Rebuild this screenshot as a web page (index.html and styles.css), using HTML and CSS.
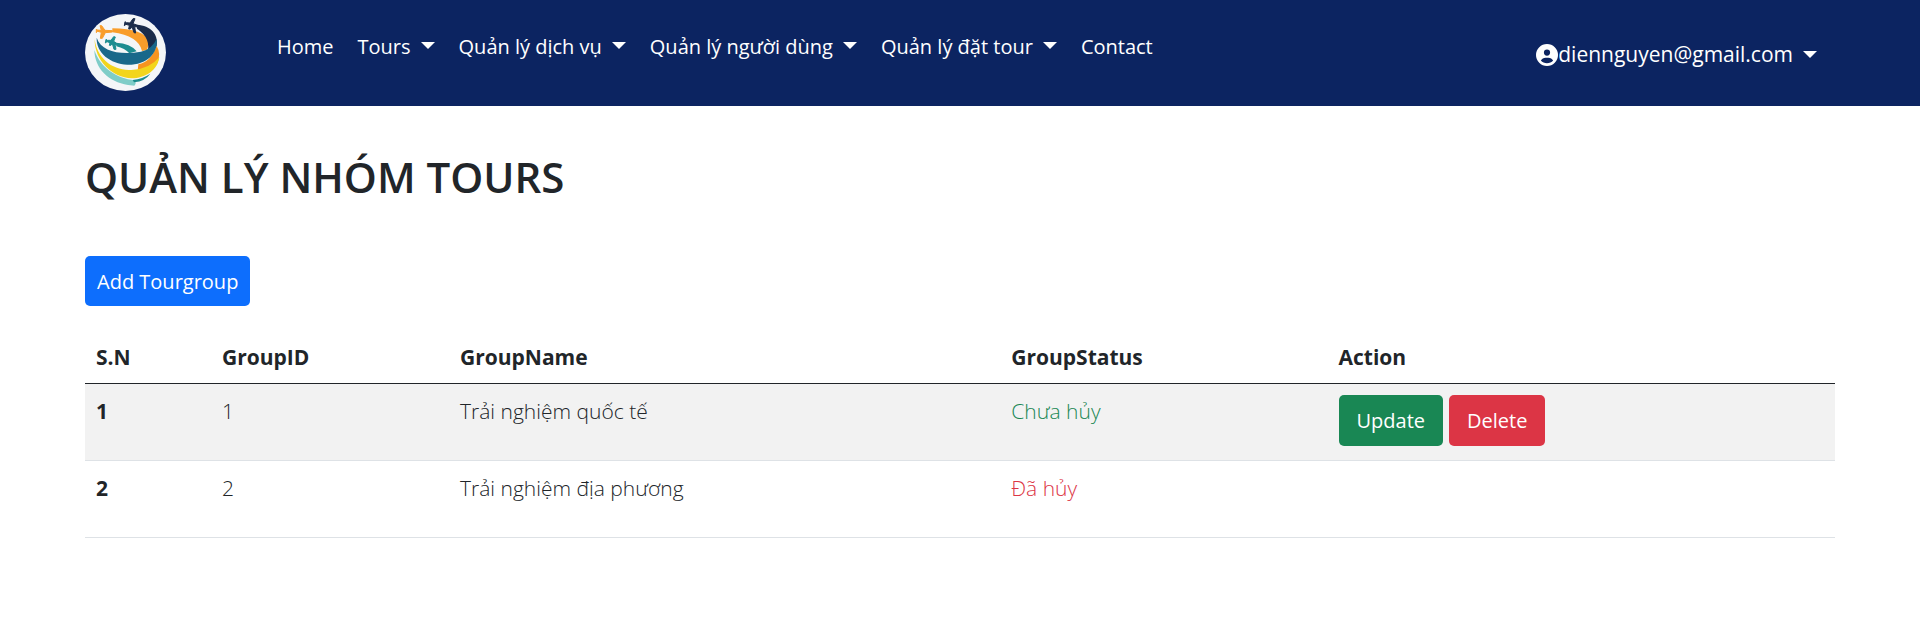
FILE: index.html
```html
<!DOCTYPE html>
<html lang="vi">
<head>
<meta charset="utf-8">
<meta name="viewport" content="width=device-width, initial-scale=1">
<title>Quản lý nhóm tours</title>
<link rel="stylesheet" href="styles.css">
</head>
<body>
<header class="navbar">
  <a class="brand" href="#" aria-label="Home">
    <svg class="logo" viewBox="45 42 243 231" aria-hidden="true">
      <ellipse cx="166.500" cy="157.500" rx="121.500" ry="115.500" fill="#f4f6f8"/>
      <path d="M73 150C74 206 116 245 174 255L193 257Q201 250 194 241C139 235 91 203 73 150Z" fill="#7fcdc8"/>
      <path d="M188 240Q218 237 241 221Q226 243 192 247Z" fill="#1c8c8c"/>
      <path d="M260 138Q274 161 262 190Q248 207 203 212L205 193Q242 186 260 138Z" fill="#f7941f"/>
      <path d="M74 118C81 176 131 216 190 209Q238 207 268 172C262 212 226 235 185 235C127 234 73 181 74 118Z" fill="#f2d51c"/>
      <path d="M138 128Q182 130 200 154L178 160Q165 145 139 139Z" fill="#1d8d90"/>
      <path d="M127 85Q222 86 238 125L231 150L216 153Q206 108 127 97Z" fill="#f99d2a"/>
      <path d="M201 74C242 76 266 103 260 137Q254 153 231 161Q246 116 201 86Z" fill="#1b2c4a"/>
      <path d="M80 113C94 155 151 166 213 155Q247 147 260 116C265 162 229 195 172 194C121 191 78 159 80 113Z" fill="#19688a"/>
      <path d="M127 92L105 91L95 77L90 77L94 91L82 90L79 87L79 98L83 94L94 97L91 115L97 115L106 98L127 96Z" fill="#f99d2a" stroke="#f99d2a" stroke-width="3"/>
      <path d="M203 76L189 71L195 56L189 56L180 69L169 68L165 65L163 77L168 73L178 76L176 87L181 87L186 80L192 98L197 99L194 80L203 81Z" fill="#1b2c4a" stroke="#1b2c4a" stroke-width="3"/>
      <path d="M139 129L131 124L136 111L131 110L123 121L112 121L108 118L106 129L111 125L120 128L118 136L123 136L127 131L132 148L138 148L135 133L139 134Z" fill="#1d8d90" stroke="#1d8d90" stroke-width="3"/>
    </svg>
  </a>
  <nav class="menu" aria-label="Main">
    <a class="nav-link" href="#">Home</a>
    <a class="nav-link toggle" href="#">Tours</a>
    <a class="nav-link toggle" href="#">Quản lý dịch vụ</a>
    <a class="nav-link toggle" href="#">Quản lý người dùng</a>
    <a class="nav-link toggle" href="#">Quản lý đặt tour</a>
    <a class="nav-link" href="#">Contact</a>
  </nav>
  <a class="user toggle" href="#">
    <svg class="user-icon" viewBox="0 0 512 512" aria-hidden="true"><path fill="#fff" d="M399 384.200C376.900 345.800 335.400 320 288 320H224c-47.400 0-88.900 25.800-111 64.200 35.200 39.200 86.200 63.800 143 63.800s107.800-24.700 143-63.800zM0 256a256 256 0 1 1 512 0A256 256 0 1 1 0 256zm256 16a72 72 0 1 0 0-144 72 72 0 1 0 0 144z"/></svg>diennguyen@gmail.com</a>
</header>
<main class="content">
  <h1 class="title">QUẢN LÝ NHÓM TOURS</h1>
  <a class="btn btn-add" href="#">Add Tourgroup</a>
  <table class="table">
    <colgroup><col class="col-sn"><col class="col-id"><col class="col-name"><col class="col-status"><col></colgroup>
    <thead>
      <tr><th scope="col">S.N</th><th scope="col">GroupID</th><th scope="col">GroupName</th><th scope="col">GroupStatus</th><th scope="col">Action</th></tr>
    </thead>
    <tbody>
      <tr>
        <th scope="row">1</th><td>1</td><td>Trải nghiệm quốc tế</td><td class="active">Chưa hủy</td>
        <td><div class="actions"><button class="btn btn-update" type="button">Update</button><button class="btn btn-delete" type="button">Delete</button></div></td>
      </tr>
      <tr>
        <th scope="row">2</th><td>2</td><td>Trải nghiệm địa phương</td><td class="cancelled">Đã hủy</td><td></td>
      </tr>
    </tbody>
  </table>
</main>
</body>
</html>
```
FILE: styles.css
```css
* { box-sizing: border-box; }

body {
  margin: 0;
  background: #fff;
  color: #212529;
  font-family: "Segoe UI", "Open Sans", "Noto Sans", sans-serif;
  font-size: 21px;
  line-height: 33px;
}

a { color: inherit; text-decoration: none; }

.navbar {
  display: flex;
  align-items: flex-start;
  min-height: 106px;
  padding: 14px 85px;
  background: #0c2461;
  color: #fff;
}

.brand { display: flex; margin-right: 99px; }
.logo { width: 81px; height: 77px; }

.menu { display: flex; padding-top: 16px; font-size: 20px; }
.nav-link { padding: 0 12px; white-space: nowrap; }

.toggle::after {
  content: "";
  display: inline-block;
  margin-left: 10px;
  vertical-align: 5px;
  border-top: 7px solid;
  border-right: 7px solid transparent;
  border-left: 7px solid transparent;
}

.user {
  display: flex;
  align-items: center;
  margin-left: auto;
  padding: 24px 18px 0 0;
}
.user-icon { width: 22px; height: 22px; }

.content { padding: 44px 85px; }

.title {
  margin: 0 0 53px;
  font-size: 42px;
  font-weight: 600;
  line-height: 53px;
}

.btn {
  display: inline-block;
  padding: 9px 18px;
  border: 0;
  border-radius: 5px;
  color: #fff;
  font: inherit;
  font-size: 20px;
  font-weight: 400;
  line-height: 33px;
}
.btn-add { padding: 9px 12px 8px; background: #0d6efd; }
.btn-update { background: #198754; }
.btn-delete { background: #dc3545; }
.actions { display: flex; gap: 6px; }

.table {
  width: 100%;
  margin-top: 22px;
  border-collapse: collapse;
  table-layout: fixed;
}
.col-sn { width: 7.2%; }
.col-id { width: 13.6%; }
.col-name { width: 31.5%; }
.col-status { width: 18.7%; }
.table th, .table td {
  padding: 11px;
  border-bottom: 1px solid #dee2e6;
  text-align: left;
  vertical-align: top;
}
.table th { font-weight: 700; }
.table td { font-weight: 300; }
.table thead th { padding: 13px 11px 9px; border-color: #212529; }
.table tbody tr { height: 77px; }
.table tbody tr:nth-child(odd) { background: #f2f2f2; }
.table .active { color: #198754; }
.table .cancelled { color: #dc3545; }
```
